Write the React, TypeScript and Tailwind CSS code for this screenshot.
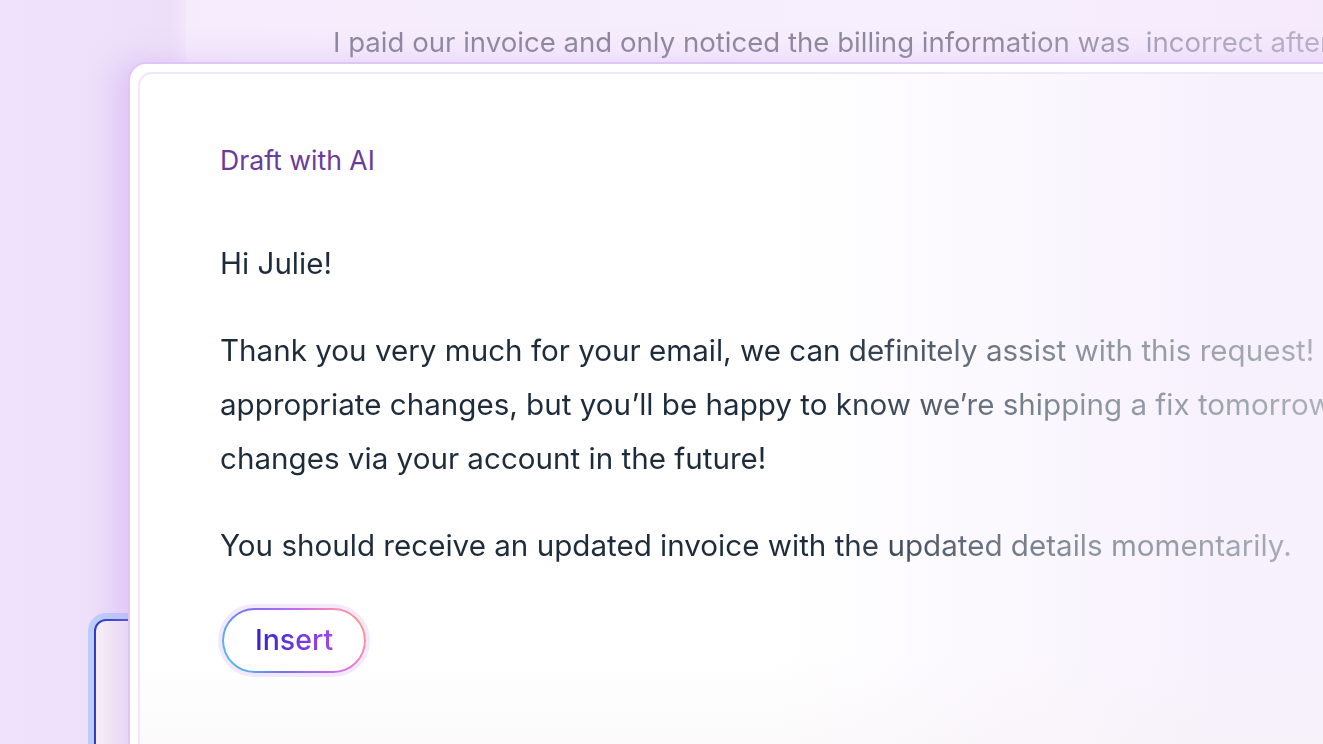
import React from "react";

const lines = [
  "Thank you very much for your email, we can definitely assist with this request! I’ve made the",
  "appropriate changes, but you’ll be happy to know we’re shipping a fix tomorrow so you can make these",
  "changes via your account in the future!",
];

export default function App() {
  return (
    <div
      className="relative h-[744px] w-[1323px] overflow-hidden bg-[linear-gradient(90deg,#efe2fc,#eedff9_170px,#f2e6fc_186px)]"
      style={{ fontFamily: "Inter, 'Noto Sans', sans-serif" }}
    >
      {/* ticket behind */}
      <div className="absolute left-[186px] top-0 h-[200px] w-[1200px] bg-[linear-gradient(90deg,#f5ebfc,#f7effd_60%,#f5e9fc)]">
        <p className="mt-[25px] w-[1160px] whitespace-nowrap bg-[linear-gradient(90deg,#8d889d_0px,#8d889d_800px,#aca7bc_1000px,#bbb5c9_1160px)] bg-clip-text pl-[147px] text-[27.6px] leading-[34px] text-transparent">
          I paid our invoice and only noticed the billing information was&nbsp; incorrect after
        </p>
      </div>

      {/* blue window peeking out */}
      <div className="absolute left-[88px] top-[613px] h-[200px] w-[300px] rounded-[18px] border-[6px] border-[#bccffa]">
        <div className="h-full rounded-[12px] border-2 border-[#2b3bcb] bg-[#f9f1f8]" />
      </div>

      {/* draft card */}
      <div className="absolute left-[128px] top-[62px] h-[800px] w-[1300px] rounded-[18px] border-2 border-[#dfc6f7] bg-white p-[8px] shadow-[-14px_0_30px_rgba(196,150,240,0.35)]">
        <div className="h-full rounded-[14px] border-2 border-[#f1e7fc] bg-[linear-gradient(180deg,rgba(255,255,255,0)_75%,rgba(246,242,243,0.8)_100%),linear-gradient(90deg,#ffffff_50%,#f7f1fd_85%)] pl-[80px] pt-[70px]">
          <p className="text-[26.6px] leading-[32px] text-[#6a3b9d]">Draft with AI</p>

          <div className="mt-[60px] w-[1140px] bg-[linear-gradient(90deg,#1d2b3b_0px,#1d2b3b_610px,#5c6776_730px,#8c94a1_870px,#a6abb6_1070px,#b5b8c2_1140px)] bg-clip-text text-[29.6px] leading-[54px] text-transparent">
            <p className="whitespace-nowrap">Hi Julie!</p>
            <div className="mt-[33px]">
              {lines.map((l) => (
                <p key={l} className="whitespace-nowrap">
                  {l}
                </p>
              ))}
            </div>
            <p className="mt-[33px] whitespace-nowrap">
              You should receive an updated invoice with the updated details momentarily.
            </p>
          </div>

          <div className="mt-[36px] ml-[2px] w-fit rounded-full ring-[4px] ring-[#f3e8fd]">
            <div className="rounded-full bg-[linear-gradient(60deg,#4fcbf0,#7a6ef2_35%,#c46cf0_62%,#f58ab4_82%,#f5a07e)] p-[2px]">
              <button className="flex h-[61px] w-[140px] items-center justify-center rounded-full bg-white">
                <span className="bg-[linear-gradient(90deg,#3222cc,#a048ee)] bg-clip-text text-[28.5px] font-medium leading-none text-transparent">
                  Insert
                </span>
              </button>
            </div>
          </div>
        </div>
      </div>
    </div>
  );
}
